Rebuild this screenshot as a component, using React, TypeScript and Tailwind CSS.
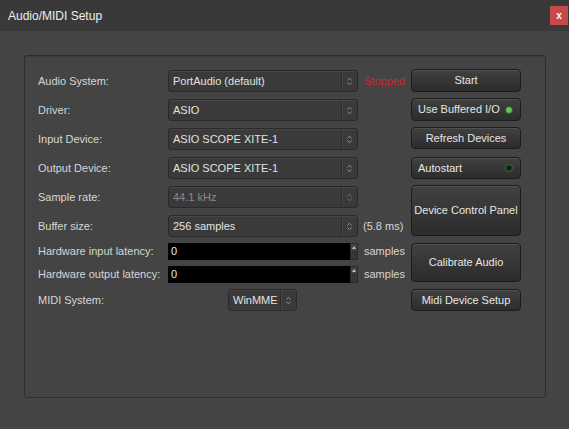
import React from 'react';

const font = { fontFamily: '"Liberation Sans", Arial, sans-serif' };

const UpDown = ({ dim }: { dim?: boolean }) => (
  <svg width="5" height="9" viewBox="0 0 5 9" className="block">
    <path d="M0.5 3.5 L2.5 1.2 L4.5 3.5" fill="none" stroke={dim ? '#6a6a6a' : '#8e8e8e'} strokeWidth="1" />
    <path d="M0.5 5.5 L2.5 7.8 L4.5 5.5" fill="none" stroke={dim ? '#6a6a6a' : '#8e8e8e'} strokeWidth="1" />
  </svg>
);

const Combo = ({ text, disabled, className = 'w-[190px]' }: { text: string; disabled?: boolean; className?: string }) => (
  <div
    className={`${className} h-[22px] flex items-center rounded-[3px] border border-[#2a2a2a] bg-[#3a3a3a] shadow-[inset_0_1px_0_#464646]`}
  >
    <span className={`flex-1 pl-[4px] text-[11px] truncate ${disabled ? 'text-[#8a8a8a]' : 'text-[#e2e2e2]'}`}>{text}</span>
    <div className="w-[16px] h-[18px] flex items-center justify-center border-l border-[#2c2c2c] shadow-[inset_1px_0_0_#464646]">
      <UpDown dim={disabled} />
    </div>
  </div>
);

const Spin = () => (
  <div className="w-[190px] h-[17px] flex">
    <div className="flex-1 bg-black flex items-center pl-[3px] text-[11px] text-[#e8e8e8]">0</div>
    <div className="w-[8px] flex flex-col border border-[#2a2a2a]">
      <div className="flex-1 bg-[#444] flex items-center justify-center">
        <svg width="4" height="3" viewBox="0 0 4 3"><path d="M0 3 L2 0 L4 3 Z" fill="#bdbdbd" /></svg>
      </div>
      <div className="flex-1 bg-[#363636] border-t border-[#2a2a2a]" />
    </div>
  </div>
);

const Btn = ({ children, h = 'h-[23px]', left }: { children: React.ReactNode; h?: string; left?: boolean }) => (
  <div
    className={`${h} w-[110px] flex items-center ${left ? 'justify-between pl-[6px] pr-[7px]' : 'justify-center'} rounded-[4px] border border-[#1c1c1c] bg-gradient-to-b from-[#414141] to-[#2c2c2c] shadow-[inset_0_1px_0_#505050] text-[11px] text-[#e6e6e6]`}
  >
    {children}
  </div>
);

const Led = ({ on }: { on?: boolean }) => (
  <span
    className={`w-[8px] h-[8px] rounded-full border ${on ? 'bg-[#66c266] border-[#2c5a2c]' : 'bg-[#0f2410] border-[#4a6a4a]'}`}
  />
);

const Row = ({ label, children, extra, h = 'h-[22px]' }: { label: string; children: React.ReactNode; extra?: React.ReactNode; h?: string }) => (
  <div className={`${h} flex items-center`}>
    <span className="w-[130px] text-[11px] text-[#d6d6d6] whitespace-nowrap">{label}</span>
    <div className="w-[190px] flex">{children}</div>
    <div className="ml-[6px] w-[41px] text-[11px] whitespace-nowrap">{extra}</div>
  </div>
);

export default function App() {
  return (
    <div className="w-[569px] h-[429px] bg-[#454545] overflow-hidden" style={font}>
      <div className="h-[31px] bg-[#393939] flex items-center justify-between pl-[8px] pr-[1px]">
        <span className="text-[12px] text-[#f0f0f0]">Audio/MIDI Setup</span>
        <div className="w-[18px] h-[19px] bg-[#c74a4b] flex items-center justify-center text-[10px] font-bold text-white leading-none">x</div>
      </div>

      <div className="ml-[24px] mt-[24px] w-[522px] h-[343px] rounded-[3px] border border-[#2e2e2e] bg-[#444444] shadow-[inset_0_1px_0_#3c3c3c] flex items-start pt-[13px]">
        <div className="pl-[13px] mt-[1px] flex flex-col">
          <Row label="Audio System:" extra={<span className="text-[#d42424]">Stopped</span>}>
            <Combo text="PortAudio (default)" />
          </Row>
          <div className="h-[7px]" />
          <Row label="Driver:">
            <Combo text="ASIO" />
          </Row>
          <div className="h-[7px]" />
          <Row label="Input Device:">
            <Combo text="ASIO SCOPE XITE-1" />
          </Row>
          <div className="h-[7px]" />
          <Row label="Output Device:">
            <Combo text="ASIO SCOPE XITE-1" />
          </Row>
          <div className="h-[7px]" />
          <Row label="Sample rate:">
            <Combo text="44.1 kHz" disabled />
          </Row>
          <div className="h-[7px]" />
          <Row label="Buffer size:" extra={<span className="text-[#d6d6d6] -ml-[1px]">(5.8 ms)</span>}>
            <Combo text="256 samples" />
          </Row>
          <div className="h-[6px]" />
          <Row label="Hardware input latency:" h="h-[17px]" extra={<span className="text-[#d6d6d6]">samples</span>}>
            <Spin />
          </Row>
          <div className="h-[6px]" />
          <Row label="Hardware output latency:" h="h-[17px]" extra={<span className="text-[#d6d6d6]">samples</span>}>
            <Spin />
          </Row>
          <div className="h-[6px]" />
          <Row label="MIDI System:">
            <div className="ml-[60px]">
              <Combo text="WinMME" className="w-[69px]" />
            </div>
          </Row>
        </div>

        <div className="ml-[6px] flex flex-col">
          <Btn>Start</Btn>
          <div className="h-[6px]" />
          <Btn left>
            <span>Use Buffered I/O</span>
            <Led on />
          </Btn>
          <div className="h-[6px]" />
          <Btn h="h-[22px]">Refresh Devices</Btn>
          <div className="h-[8px]" />
          <Btn h="h-[22px]" left>
            <span>Autostart</span>
            <Led />
          </Btn>
          <div className="h-[6px]" />
          <Btn h="h-[51px]">Device Control Panel</Btn>
          <div className="h-[7px]" />
          <Btn h="h-[39px]">Calibrate Audio</Btn>
          <div className="h-[7px]" />
          <Btn h="h-[22px]">Midi Device Setup</Btn>
        </div>
      </div>
    </div>
  );
}
